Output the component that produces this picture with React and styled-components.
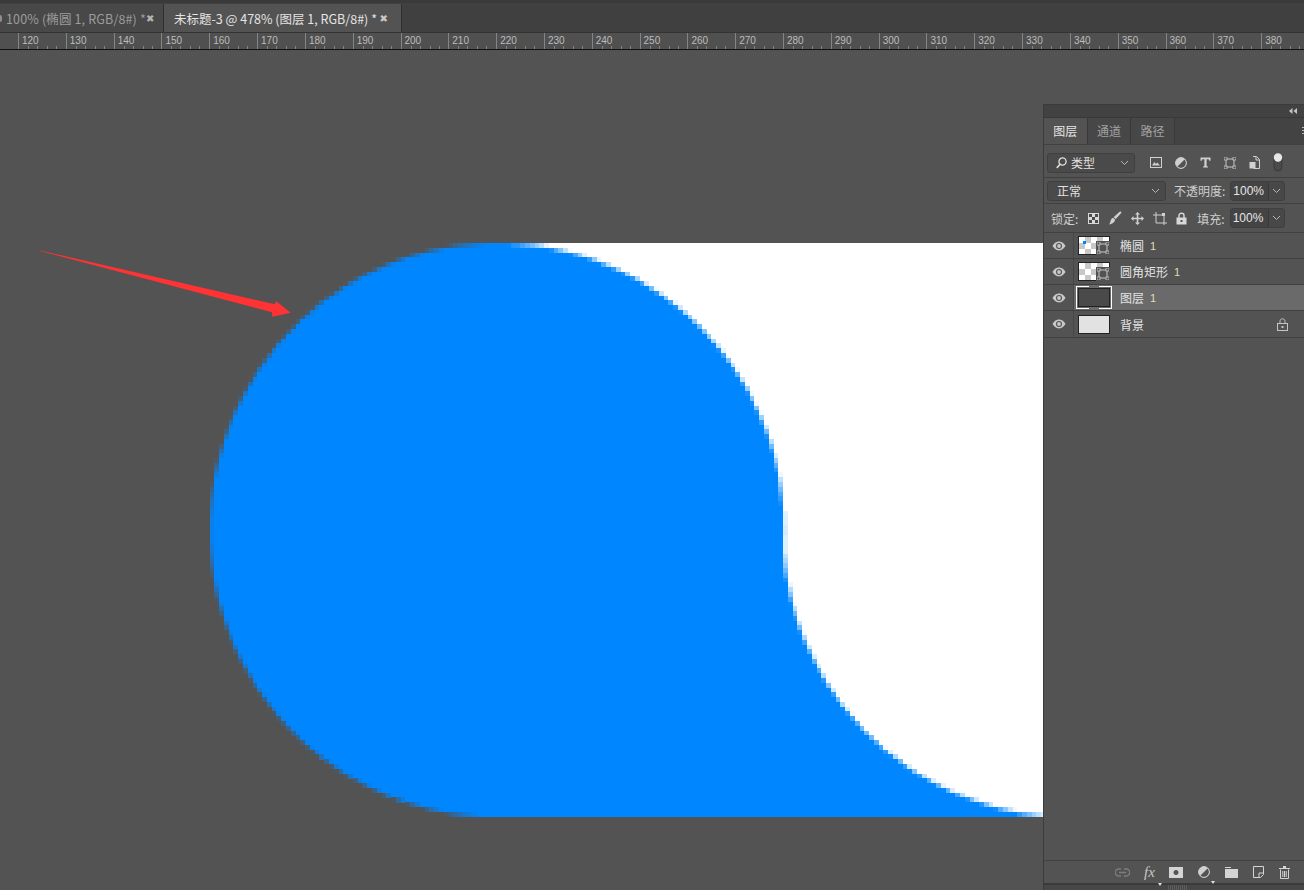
import React, { useMemo } from 'react';
import styled, { createGlobalStyle } from 'styled-components';

const GlobalStyle = createGlobalStyle`
  html, body {
    margin: 0;
    padding: 0;
    height: 100%;
    background: #535353;
    overflow: hidden;
  }
  #root { height: 100%; }
  * { box-sizing: border-box; }
`;

const FONT = '"Noto Sans CJK SC", "Liberation Sans", sans-serif';

const Page = styled.div`
  width: 1304px;
  height: 890px;
  display: flex;
  flex-direction: column;
  background: #535353;
  font-family: ${FONT};
  font-size: 12px;
  color: #d8d8d8;
  overflow: hidden;
`;

const TabBar = styled.div`
  height: 33px;
  flex: none;
  display: flex;
  background: #404040;
  border-top: 3px solid #3a3a3a;
  padding-top: 1px;
  border-bottom: 1px solid #333;
`;

const DocTab = styled.div`
  width: ${p => p.$width}px;
  display: flex;
  align-items: center;
  justify-content: space-between;
  padding: 0 ${p => p.$right}px 0 ${p => p.$pad}px;
  background: ${p => (p.$active ? '#535353' : '#484848')};
  border-right: 1px solid #2f2f2f;
  color: ${p => (p.$active ? '#e4e4e4' : '#9c9c9c')};
  font-size: 12.5px;
  white-space: nowrap;
  overflow: hidden;
`;

const TabSliver = styled.i`
  width: 2px;
  height: 7px;
  flex: none;
  margin-right: 4px;
  background: #8e8e8e;
  border-radius: 0 2px 2px 0;
`;

const TabTitle = styled.span`
  flex: 1;
  letter-spacing: ${p => (p.$wide ? '0.15px' : '0')};
`;

const CloseMark = styled.span`
  font-family: "DejaVu Sans", sans-serif;
  font-size: 10px;
  font-weight: bold;
  color: ${p => (p.$active ? '#c8c8c8' : '#b4b4b4')};
`;

const Ruler = styled.div`
  height: 17px;
  flex: none;
  display: flex;
  background: #505050;
  border-bottom: 1px solid #111;
  overflow: hidden;
  padding-left: 18px;
`;

const RulerCell = styled.div`
  width: 47.82px;
  flex: none;
  padding: 1px 0 0 3px;
  font-family: "Liberation Sans", sans-serif;
  font-size: 10px;
  line-height: 13px;
  color: #bcbcbc;
  border-left: 1px solid #858585;
  background-image: repeating-linear-gradient(to right, transparent 0, transparent 8.56px, #858585 8.56px, #858585 9.56px);
  background-size: 100% 3px;
  background-position: 0 bottom;
  background-repeat: no-repeat;
`;

const Workspace = styled.div`
  flex: 1;
  display: flex;
  min-height: 0;
`;

const CanvasArea = styled.div`
  flex: 1;
  position: relative;
  min-width: 0;
`;

const Artwork = styled.svg`
  position: absolute;
  left: 0;
  top: 0;
`;

const Panel = styled.aside`
  width: 261px;
  flex: none;
  margin-top: 54px;
  display: flex;
  flex-direction: column;
  background: #535353;
  border-left: 1px solid #3c3c3c;
  border-top: 1px solid #3c3c3c;
`;

const PanelHeader = styled.div`
  height: 13px;
  flex: none;
  background: #424242;
  border-bottom: 1px solid #383838;
  display: flex;
  justify-content: flex-end;
  align-items: center;
  padding-right: 7px;
`;

const TabRow = styled.div`
  height: 27px;
  flex: none;
  display: flex;
  align-items: stretch;
  background: #434343;
  border-bottom: 1px solid #404040;
`;

const PanelTab = styled.div`
  width: 43.6px;
  display: flex;
  align-items: center;
  justify-content: center;
  padding-bottom: 1px;
  background: ${p => (p.$active ? '#535353' : '#474747')};
  border-right: 1px solid #383838;
  color: ${p => (p.$active ? '#e6e6e6' : '#a2a2a2')};
  font-size: 12px;
`;

const TabMenu = styled.span`
  margin-left: auto;
  align-self: center;
  width: 2px;
  height: 8px;
  background: repeating-linear-gradient(to bottom, #b8b8b8 0 1px, transparent 1px 3px);
`;

const ControlRow = styled.div`
  height: ${p => p.$h}px;
  flex: none;
  display: flex;
  align-items: center;
  gap: ${p => p.$gap || 0}px;
  padding: ${p => p.$top || 0}px 0 0 ${p => p.$pad || 3}px;
  border-bottom: 1px solid #404040;
`;

const Select = styled.div`
  width: ${p => p.$w}px;
  height: 20px;
  margin-right: ${p => p.$after || 0}px;
  display: flex;
  align-items: center;
  justify-content: space-between;
  padding: 0 5px 0 ${p => p.$pad}px;
  background: #4a4a4a;
  border: 1px solid #3f3f3f;
  border-radius: 3px;
  color: #e0e0e0;
`;

const SelectLabel = styled.span`
  display: flex;
  align-items: center;
  gap: 4px;
`;

const FieldLabel = styled.span`
  color: #cfcfcf;
  font-size: 12px;
  white-space: nowrap;
`;

const NumberField = styled.div`
  width: 55px;
  height: 20px;
  display: flex;
  align-items: center;
  background: #484848;
  border: 1px solid #3f3f3f;
  border-radius: 3px;
`;

const NumberValue = styled.span`
  width: 38px;
  height: 100%;
  padding-left: 2px;
  background: #444;
  font-family: "Liberation Sans", sans-serif;
  line-height: 18px;
  color: #e6e6e6;
  border-right: 1px solid #3a3a3a;
`;

const Chevron = styled.svg`
  width: 9px;
  height: 6px;
  flex: none;
  margin: ${p => (p.$center ? 'auto' : '0')};
`;

const FilterIcons = styled.div`
  display: flex;
  align-items: center;
  gap: 13px;
  margin-left: 15px;
`;

const LockIcons = styled.div`
  display: flex;
  align-items: center;
  gap: 9px;
  margin: 0 5px;
`;

const LayerList = styled.div`
  display: flex;
  flex-direction: column;
  border-bottom: 1px solid #404040;
`;

const LayerRow = styled.div`
  height: 26px;
  display: flex;
  align-items: center;
  background: ${p => (p.$selected ? '#6a6a6a' : '#535353')};
  border-bottom: 1px solid #404040;
  &:last-child { border-bottom: 0; }
`;

const EyeCell = styled.div`
  width: 30px;
  height: 100%;
  flex: none;
  display: flex;
  align-items: center;
  justify-content: center;
  background: #535353;
  border-right: 1px solid #474747;
`;

const ThumbSlot = styled.div`
  width: 46px;
  flex: none;
  padding-left: 4px;
  display: flex;
  position: relative;
`;

const Thumb = styled.div`
  width: 32px;
  height: 19px;
  border: 1px solid #222;
  background-color: ${p => p.$fill || '#fff'};
  background-image: ${p =>
    p.$checker ? 'conic-gradient(#c8c8c8 25%, #fff 0 50%, #c8c8c8 0 75%, #fff 0)' : 'none'};
  background-size: 12px 12px;
  position: relative;
`;

const BlueDot = styled.i`
  position: absolute;
  left: 4px;
  top: 4px;
  width: 3px;
  height: 3px;
  background: #0086ff;
`;

const ShapeBadge = styled.span`
  position: absolute;
  right: -1px;
  bottom: -1px;
  width: 14px;
  height: 14px;
  background: #535353;
  display: flex;
  align-items: center;
  justify-content: center;
`;

const CornerFrame = styled.span`
  position: absolute;
  left: -3px;
  top: -3px;
  width: 36px;
  height: 23px;
  &::before, &::after {
    content: '';
    position: absolute;
    top: 0;
    bottom: 0;
    width: 12px;
    border: 1px solid #fff;
  }
  &::before { left: 0; border-right: 0; }
  &::after { right: 0; border-left: 0; }
`;

const LayerName = styled.span`
  color: #e4e4e4;
  font-size: 12px;
  white-space: nowrap;
`;

const LayerCount = styled.span`
  margin-left: 6px;
  color: #e6d9b8;
  font-family: "Liberation Sans", sans-serif;
  font-size: 11px;
`;

const LockSlot = styled.span`
  margin-left: auto;
  padding-right: 16px;
  display: flex;
`;

const Spacer = styled.div`
  flex: 1;
`;

const Footer = styled.div`
  height: 25px;
  flex: none;
  border-top: 1px solid #404040;
  border-bottom: 2px solid #3a3a3a;
  display: flex;
  align-items: center;
  justify-content: flex-end;
  gap: 15px;
  padding-right: 14px;
`;

const FooterItem = styled.span`
  position: relative;
  display: flex;
  margin-right: ${p => p.$pull || 0}px;
  &::after {
    content: ${p => (p.$caret ? "''" : 'none')};
    position: absolute;
    right: -5px;
    bottom: -6px;
    border: 2px solid transparent;
    border-top: 3px solid #e0e0e0;
    border-bottom: 0;
  }
`;

const FxMark = styled.span`
  font-family: "Liberation Serif", serif;
  font-style: italic;
  font-size: 15px;
  color: #c8c8c8;
  line-height: 1;
  width: 13px;
`;

const Grip = styled.div`
  height: 5px;
  flex: none;
  display: flex;
  justify-content: center;
  background: #474747;
  &::after {
    content: '';
    width: 20px;
    margin-left: 8px;
    background: repeating-linear-gradient(to right, #5c5c5c 0 1px, transparent 1px 2px);
  }
`;

const Icon = ({ w = 14, h = 14, children }) => (
  <svg width={w} height={h} viewBox={`0 0 ${w} ${h}`} style={{ display: 'block', flex: 'none' }}>
    {children}
  </svg>
);

const ChevronDown = ({ center }) => (
  <Chevron viewBox="0 0 9 6" $center={center}>
    <path d="M1 1l3.5 3.5L8 1" fill="none" stroke="#b8b8b8" strokeWidth="1" />
  </Chevron>
);

const Search = () => (
  <Icon w={11} h={12}>
    <circle cx="6.5" cy="4.5" r="3.6" fill="none" stroke="#e0e0e0" strokeWidth="1.3" />
    <path d="M4 7.2L0.8 11" stroke="#e0e0e0" strokeWidth="1.6" />
  </Icon>
);

const Eye = () => (
  <Icon w={14} h={10}>
    <path d="M0.5 5C3 1.2 5 0.6 7 0.6S11 1.2 13.5 5C11 8.8 9 9.4 7 9.4S3 8.8 0.5 5Z" fill="#c8c8c8" />
    <circle cx="7" cy="5" r="3" fill="#535353" />
    <circle cx="7" cy="5" r="1.9" fill="#c8c8c8" />
  </Icon>
);

const LockOutline = () => (
  <Icon w={11} h={13}>
    <rect x="0.5" y="5.5" width="10" height="7" fill="none" stroke="#c4c4c4" />
    <path d="M3 5.5V3.2C3 0 8 0 8 3.2V5.5" fill="none" stroke="#c4c4c4" />
    <rect x="4.5" y="8" width="2" height="2" fill="#c4c4c4" />
  </Icon>
);

const TransformBadge = () => (
  <Icon w={12} h={12}>
    <rect x="2" y="2" width="8" height="8" fill="none" stroke="#c8c8c8" />
    {[[0, 0], [9, 0], [0, 9], [9, 9]].map(([x, y]) => (
      <rect key={`${x}${y}`} x={x} y={y} width="3" height="3" fill="#535353" stroke="#c8c8c8" strokeWidth="0.8" />
    ))}
  </Icon>
);

const ImageFilter = () => (
  <Icon w={12} h={11}>
    <rect x="0.5" y="0.5" width="11" height="10" fill="none" stroke="#d0d0d0" />
    <path d="M2 8.5l2.4-3.4 1.5 2 1.3-1.5 2.8 2.9z" fill="#d0d0d0" />
  </Icon>
);

const AdjustFilter = () => (
  <Icon w={12} h={12}>
    <circle cx="6" cy="6" r="5.4" fill="#d0d0d0" />
    <path d="M9.8 2.2A5.4 5.4 0 0 1 2.2 9.8Z" fill="#535353" />
    <circle cx="6" cy="6" r="5.4" fill="none" stroke="#d0d0d0" />
  </Icon>
);

const TypeFilter = () => (
  <Icon w={11} h={11}>
    <path d="M0.5 0.5h10v3.2h-1.2L8.6 2.2H6.6v6.9l1.4.6v.8H3v-.8l1.4-.6V2.2H2.4l-.7 1.5H.5z" fill="#d0d0d0" />
  </Icon>
);

const SmartFilter = () => (
  <Icon w={11} h={13}>
    <path d="M4 0.5h3.5l3 3v9h-6" fill="none" stroke="#d0d0d0" />
    <rect x="0.5" y="6" width="6" height="6.5" fill="#d0d0d0" />
    <path d="M7 1v3h3" fill="none" stroke="#d0d0d0" />
  </Icon>
);

const ToggleFilter = () => (
  <Icon w={10} h={19}>
    <rect x="1" y="1" width="8" height="17" rx="4" fill="#4a4a4a" stroke="#3a3a3a" />
    <circle cx="5" cy="4.5" r="4.2" fill="#e8e8e8" />
  </Icon>
);

const Checker = () => (
  <Icon w={11} h={11}>
    <rect x="0.5" y="0.5" width="10" height="10" fill="#d8d8d8" stroke="#d8d8d8" />
    {[[1, 1], [7, 1], [4, 4], [1, 7], [7, 7]].map(([x, y]) => (
      <rect key={`${x}${y}`} x={x} y={y} width="3" height="3" fill="#4a4a4a" />
    ))}
  </Icon>
);

const BrushLock = () => (
  <Icon w={14} h={14}>
    <path d="M13 0.8c.6.4.4 1-.2 1.6L7.8 8 5.6 6.2 11 1.2c.7-.6 1.4-.8 2-.4z" fill="#d0d0d0" />
    <path d="M5 6.8l2.2 1.9C6.8 11 4 13.4 0.8 13.4c1.3-1 1.4-2.2 1.8-3.7.3-1.3 1.2-2.4 2.4-2.9z" fill="#d0d0d0" />
  </Icon>
);

const MoveLock = () => (
  <Icon w={13} h={13}>
    <path d="M6.5 0L9 2.5H7.3V5.7H10.5V4L13 6.5 10.5 9V7.3H7.3V10.5H9L6.5 13 4 10.5H5.7V7.3H2.5V9L0 6.5 2.5 4V5.7H5.7V2.5H4Z" fill="#d0d0d0" />
  </Icon>
);

const ArtboardLock = () => (
  <Icon w={14} h={13}>
    <path d="M3 0v11h11M0 3h11v10" fill="none" stroke="#d0d0d0" />
    <rect x="9" y="1" width="3" height="3" fill="#d0d0d0" />
  </Icon>
);

const SolidLock = () => (
  <Icon w={11} h={13}>
    <path d="M3 6V3.4C3 .6 8 .6 8 3.4V6" fill="none" stroke="#d8d8d8" strokeWidth="1.4" />
    <path d="M0.5 5.5h10v7h-10zM4.5 8v2h2V8z" fill="#d8d8d8" fillRule="evenodd" />
  </Icon>
);

const LinkIcon = () => (
  <Icon w={15} h={9}>
    <path d="M6 1H3.8a3.5 3.5 0 0 0 0 7H6M9 1h2.2a3.5 3.5 0 0 1 0 7H9M4 4.5h7" fill="none" stroke="#7d7d7d" strokeWidth="1.3" />
  </Icon>
);

const MaskIcon = () => (
  <Icon w={14} h={11}>
    <path d="M0 0h14v11H0zM7 3a2.5 2.5 0 1 0 .01 0z" fill="#d4d4d4" fillRule="evenodd" />
  </Icon>
);

const FolderIcon = () => (
  <Icon w={13} h={11}>
    <path d="M0 0h6v1H0zM0 2h13v9H0z" fill="#d4d4d4" />
  </Icon>
);

const NewLayerIcon = () => (
  <Icon w={11} h={12}>
    <path d="M0.5 0.5h10v8l-3 3h-7z" fill="none" stroke="#d4d4d4" />
    <path d="M6 11V7h4" fill="none" stroke="#d4d4d4" />
  </Icon>
);

const TrashIcon = () => (
  <Icon w={11} h={13}>
    <path d="M0 2h11v1H0zM4 0h3v2H4z" fill="#d4d4d4" />
    <path d="M1.5 3.5v9h8v-9M3.8 5v6M5.5 5v6M7.2 5v6" fill="none" stroke="#d4d4d4" />
  </Icon>
);

const WS_TOP = 50;
const DOC_LEFT = 18.3;
const DOC_TOP = 243 - WS_TOP;
const PX = 4.78;
const ROWS = 120;
const CANVAS_W = 1043;
const CANVAS_H = 840;
const SAMPLES = 8;

// shape in workspace coordinates: big circle on the left, white circle bitten out bottom right
const CY = 530 - WS_TOP;
const BOTTOM = DOC_TOP + ROWS * PX;
const isBlue = (x, y) => {
  if (y < DOC_TOP || y > BOTTOM) return false;
  const inLeft = (x - 497) ** 2 + (y - CY) ** 2 <= 287 ** 2;
  if (inLeft) return true;
  if (x < 497 || y < CY) return false;
  return (x - 1070) ** 2 + (y - CY) ** 2 > 287 ** 2;
};

const mix = (a, b, t) => {
  const ch = i => Math.round(a[i] * t + b[i] * (1 - t));
  return `rgb(${ch(0)},${ch(1)},${ch(2)})`;
};

const buildPixels = () => {
  const out = [];
  for (let r = 0; r < ROWS; r++) {
    const y = DOC_TOP + r * PX;
    let run = null;
    for (let c = 0; ; c++) {
      const x = DOC_LEFT + c * PX;
      if (x >= CANVAS_W) break;
      let hits = 0;
      for (let i = 0; i < SAMPLES; i++) {
        for (let j = 0; j < SAMPLES; j++) {
          if (isBlue(x + (i + 0.5) * PX / SAMPLES, y + (j + 0.5) * PX / SAMPLES)) hits++;
        }
      }
      const under = x + PX / 2 < 497 ? [83, 83, 83] : [255, 255, 255];
      const fill = mix([0, 134, 255], under, hits / (SAMPLES * SAMPLES));
      if (run && run.fill === fill) {
        run.w += PX;
      } else {
        if (run) out.push(run);
        run = { x, y, w: PX, fill };
      }
    }
    if (run) out.push(run);
  }
  return out.filter(p => p.fill !== 'rgb(83,83,83)');
};

const Drawing = () => {
  const pixels = useMemo(buildPixels, []);
  return (
    <Artwork width={CANVAS_W} height={CANVAS_H} viewBox={`0 0 ${CANVAS_W} ${CANVAS_H}`} shapeRendering="crispEdges">
      {pixels.map(p => (
        <rect key={`${p.x}-${p.y}`} x={p.x} y={p.y} width={p.w + 0.3} height={PX + 0.3} fill={p.fill} />
      ))}
      <polygon points="40,200.4 275,254.3 276,251 290.7,262.7 272.3,266.7 272,262.3 40,200.9" fill="#ff3333" shapeRendering="auto" />
    </Artwork>
  );
};

const rulerMarks = Array.from({ length: 27 }, (_, i) => 120 + i * 10);

const layers = [
  { name: '椭圆', count: '1', checker: true, dot: true, shape: true },
  { name: '圆角矩形', count: '1', checker: true, shape: true },
  { name: '图层', count: '1', selected: true, fill: '#4a4a4a', frame: true },
  { name: '背景', fill: '#e2e2e2', locked: true },
];

export default function App() {
  return (
    <Page>
      <GlobalStyle />
      <TabBar>
        <DocTab $width={164} $pad={0} $right={10}>
          <TabSliver />
          <TabTitle $wide>100% (椭圆 1, RGB/8#) *</TabTitle>
          <CloseMark>✖</CloseMark>
        </DocTab>
        <DocTab $width={238} $pad={10} $right={13} $active>
          <TabTitle>未标题-3 @ 478% (图层 1, RGB/8#) *</TabTitle>
          <CloseMark $active>✖</CloseMark>
        </DocTab>
      </TabBar>
      <Ruler>
        {rulerMarks.map(n => (
          <RulerCell key={n}>{n}</RulerCell>
        ))}
      </Ruler>
      <Workspace>
        <CanvasArea>
          <Drawing />
        </CanvasArea>
        <Panel>
          <PanelHeader>
            <Icon w={8} h={6}>
              <path d="M3.5 0v6L0 3zM8 0v6L4.5 3z" fill="#c4c4c4" />
            </Icon>
          </PanelHeader>
          <TabRow>
            <PanelTab $active>图层</PanelTab>
            <PanelTab>通道</PanelTab>
            <PanelTab>路径</PanelTab>
            <TabMenu />
          </TabRow>
          <ControlRow $h={33} $top={3}>
            <Select $w={88} $pad={8}>
              <SelectLabel>
                <Search />
                类型
              </SelectLabel>
              <ChevronDown />
            </Select>
            <FilterIcons>
              <ImageFilter />
              <AdjustFilter />
              <TypeFilter />
              <TransformBadge />
              <SmartFilter />
              <ToggleFilter />
            </FilterIcons>
          </ControlRow>
          <ControlRow $h={26} $gap={5}>
            <Select $w={119} $pad={9} $after={3}>
              <span>正常</span>
              <ChevronDown />
            </Select>
            <FieldLabel>不透明度:</FieldLabel>
            <NumberField>
              <NumberValue>100%</NumberValue>
              <ChevronDown center />
            </NumberField>
          </ControlRow>
          <ControlRow $h={29} $gap={5} $pad={7}>
            <FieldLabel>锁定:</FieldLabel>
            <LockIcons>
              <Checker />
              <BrushLock />
              <MoveLock />
              <ArtboardLock />
              <SolidLock />
            </LockIcons>
            <FieldLabel>填充:</FieldLabel>
            <NumberField>
              <NumberValue>100%</NumberValue>
              <ChevronDown center />
            </NumberField>
          </ControlRow>
          <LayerList>
            {layers.map(l => (
              <LayerRow key={l.name} $selected={l.selected}>
                <EyeCell>
                  <Eye />
                </EyeCell>
                <ThumbSlot>
                  <Thumb $checker={l.checker} $fill={l.fill}>
                    {l.dot && <BlueDot />}
                    {l.shape && (
                      <ShapeBadge>
                        <TransformBadge />
                      </ShapeBadge>
                    )}
                    {l.frame && <CornerFrame />}
                  </Thumb>
                </ThumbSlot>
                <LayerName>{l.name}</LayerName>
                {l.count && <LayerCount>{l.count}</LayerCount>}
                {l.locked && (
                  <LockSlot>
                    <LockOutline />
                  </LockSlot>
                )}
              </LayerRow>
            ))}
          </LayerList>
          <Spacer />
          <Footer>
            <FooterItem $pull={-1}><LinkIcon /></FooterItem>
            <FooterItem $caret $pull={-3}><FxMark>fx</FxMark></FooterItem>
            <FooterItem><MaskIcon /></FooterItem>
            <FooterItem $caret><AdjustFilter /></FooterItem>
            <FooterItem><FolderIcon /></FooterItem>
            <FooterItem><NewLayerIcon /></FooterItem>
            <FooterItem><TrashIcon /></FooterItem>
          </Footer>
          <Grip />
        </Panel>
      </Workspace>
    </Page>
  );
}
